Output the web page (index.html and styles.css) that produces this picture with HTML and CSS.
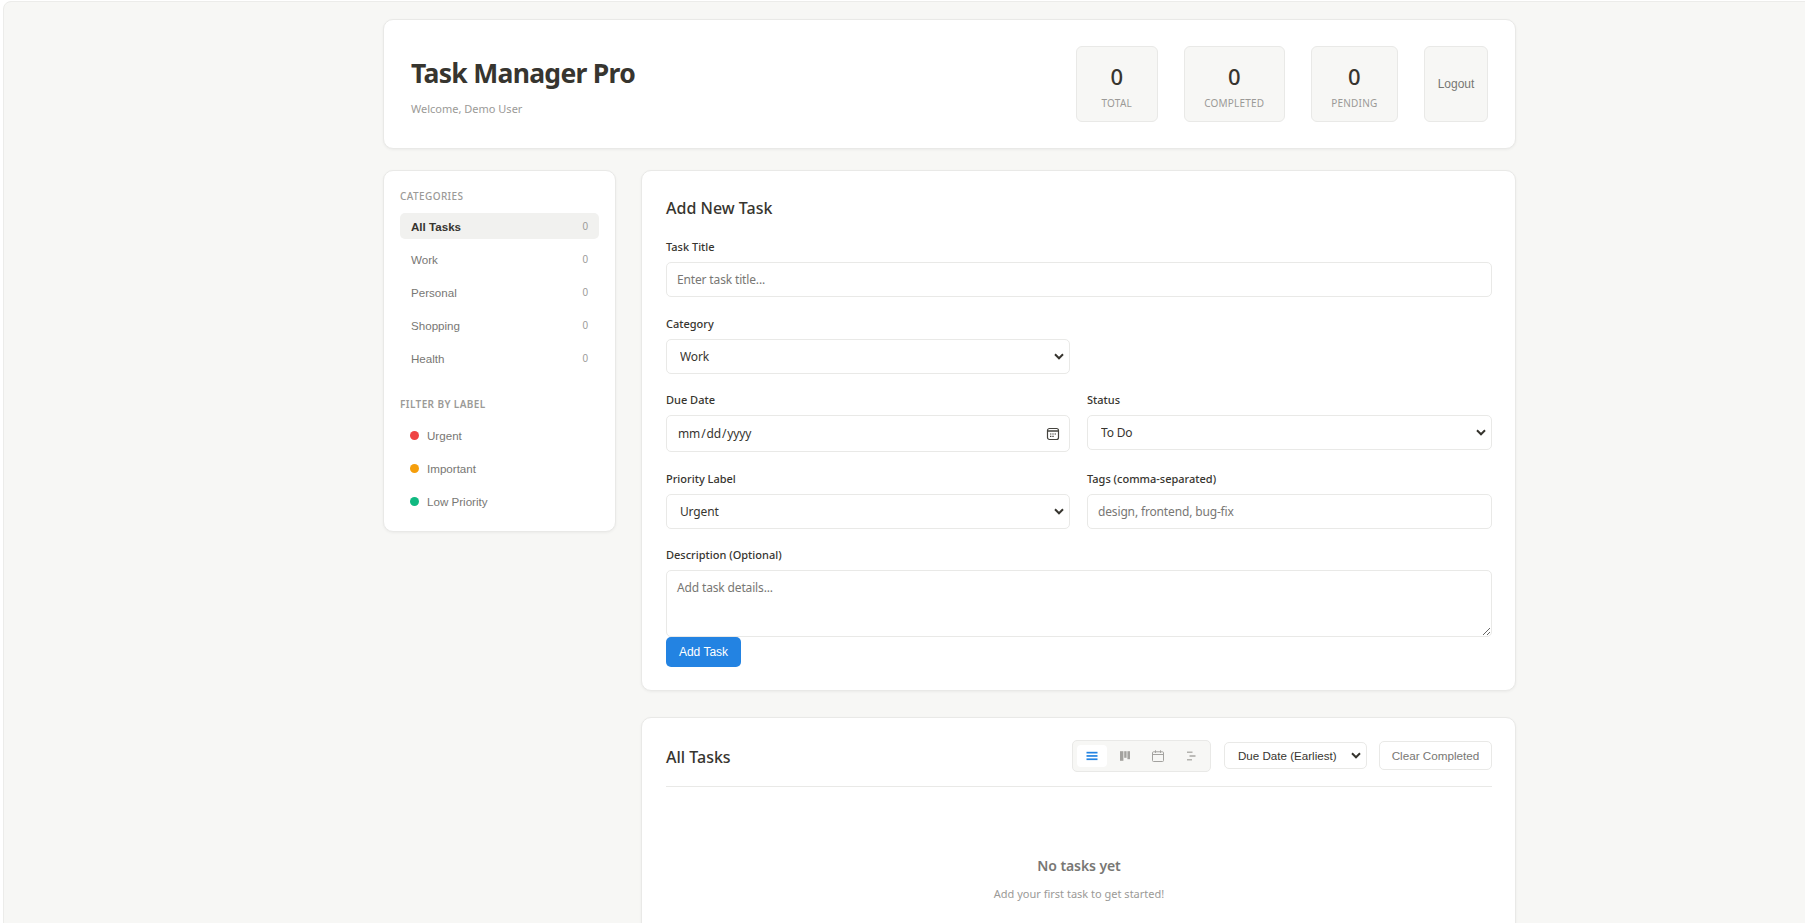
FILE: index.html
```html
<!DOCTYPE html>
<html lang="en">
<head>
    <meta charset="UTF-8">
    <meta name="viewport" content="width=device-width, initial-scale=1.0">
    <title>Task Manager Pro</title>
    <link rel="stylesheet" href="styles.css">
</head>
<body>
    <div class="frame">
        <div class="app">
            <header class="card top-bar">
                <div class="brand">
                    <h1>Task Manager Pro</h1>
                    <p>Welcome, Demo User</p>
                </div>
                <div class="top-actions">
                    <div class="stat stat-total"><span class="stat-value">0</span><span class="stat-label">Total</span></div>
                    <div class="stat"><span class="stat-value">0</span><span class="stat-label">Completed</span></div>
                    <div class="stat"><span class="stat-value">0</span><span class="stat-label">Pending</span></div>
                    <button class="logout" type="button">Logout</button>
                </div>
            </header>

            <div class="columns">
                <aside class="card sidebar">
                    <h3 class="side-title">Categories</h3>
                    <ul class="side-list">
                        <li class="side-item active"><span>All Tasks</span><span class="count">0</span></li>
                        <li class="side-item"><span>Work</span><span class="count">0</span></li>
                        <li class="side-item"><span>Personal</span><span class="count">0</span></li>
                        <li class="side-item"><span>Shopping</span><span class="count">0</span></li>
                        <li class="side-item"><span>Health</span><span class="count">0</span></li>
                    </ul>
                    <h3 class="side-title filter-title">Filter by Label</h3>
                    <ul class="side-list">
                        <li class="side-item label-item"><span class="dot dot-red"></span><span>Urgent</span></li>
                        <li class="side-item label-item"><span class="dot dot-orange"></span><span>Important</span></li>
                        <li class="side-item label-item"><span class="dot dot-green"></span><span>Low Priority</span></li>
                    </ul>
                </aside>

                <main class="main">
                    <section class="card panel">
                        <h2>Add New Task</h2>
                        <form class="task-form">
                            <div class="field">
                                <label for="title">Task Title</label>
                                <input type="text" id="title" placeholder="Enter task title...">
                            </div>
                            <div class="form-row">
                                <div class="field">
                                    <label for="category">Category</label>
                                    <select id="category">
                                        <option>Work</option>
                                        <option>Personal</option>
                                        <option>Shopping</option>
                                        <option>Health</option>
                                    </select>
                                </div>
                            </div>
                            <div class="form-row">
                                <div class="field">
                                    <label for="due">Due Date</label>
                                    <input type="date" id="due">
                                </div>
                                <div class="field">
                                    <label for="status">Status</label>
                                    <select id="status">
                                        <option>To Do</option>
                                        <option>In Progress</option>
                                        <option>Done</option>
                                    </select>
                                </div>
                            </div>
                            <div class="form-row">
                                <div class="field">
                                    <label for="priority">Priority Label</label>
                                    <select id="priority">
                                        <option>Urgent</option>
                                        <option>Important</option>
                                        <option>Low Priority</option>
                                    </select>
                                </div>
                                <div class="field">
                                    <label for="tags">Tags (comma-separated)</label>
                                    <input type="text" id="tags" placeholder="design, frontend, bug-fix">
                                </div>
                            </div>
                            <div class="field field-last">
                                <label for="desc">Description (Optional)</label>
                                <textarea id="desc" placeholder="Add task details..."></textarea>
                            </div>
                            <button class="add-btn" type="submit">Add Task</button>
                        </form>
                    </section>

                    <section class="card panel list-panel">
                        <div class="list-head">
                            <h2>All Tasks</h2>
                            <div class="list-tools">
                                <div class="view-tabs">
                                    <button class="view-tab active" type="button" aria-label="List">
                                        <svg width="12" height="12" viewBox="0 0 12 12"><rect x="0.5" y="1.8" width="11" height="1.7"/><rect x="0.5" y="5.1" width="11" height="1.7"/><rect x="0.5" y="8.4" width="11" height="1.7"/></svg>
                                    </button>
                                    <button class="view-tab" type="button" aria-label="Board">
                                        <svg width="12" height="12" viewBox="0 0 12 12"><rect x="1" y="1.2" width="3.4" height="9.6"/><rect x="5.2" y="1.2" width="2.4" height="6.6"/><rect x="8.4" y="1.2" width="2.6" height="8"/></svg>
                                    </button>
                                    <button class="view-tab" type="button" aria-label="Calendar">
                                        <svg width="12" height="12" viewBox="0 0 12 12" class="outline"><rect x="0.5" y="1.8" width="11" height="9.7" rx="1"/><path d="M0.5 4.5h11M3.5 0.3v2.6M8.5 0.3v2.6"/></svg>
                                    </button>
                                    <button class="view-tab" type="button" aria-label="Timeline">
                                        <svg width="12" height="12" viewBox="0 0 12 12"><rect x="2" y="1.6" width="5.5" height="1.2"/><rect x="4.5" y="5.3" width="6" height="1.4"/><rect x="2" y="9.2" width="5" height="1.2"/></svg>
                                    </button>
                                </div>
                                <select class="sort-select">
                                    <option>Due Date (Earliest)</option>
                                    <option>Due Date (Latest)</option>
                                    <option>Priority</option>
                                </select>
                                <button class="clear-btn" type="button">Clear Completed</button>
                            </div>
                        </div>
                        <div class="empty">
                            <h3>No tasks yet</h3>
                            <p>Add your first task to get started!</p>
                        </div>
                    </section>
                </main>
            </div>
        </div>
    </div>
</body>
</html>
```

FILE: styles.css
```css
* {
    box-sizing: border-box;
}
html, body {
    height: 923px;
    overflow: hidden;
}
body {
    margin: 0;
    background-color: #ffffff;
    color: #37352f;
    font-family: 'Noto Sans', 'Open Sans', sans-serif;
}
.frame {
    width: 1893px;
    height: 1400px;
    margin: 1px 0 0 3px;
    padding-top: 17px;
    background-color: #f7f7f5;
    border: 1px solid #ececea;
    border-radius: 8px;
}
.app {
    width: 1133px;
    margin: 0 auto;
}
.card {
    background-color: #ffffff;
    border: 1px solid #e9e9e7;
    border-radius: 10px;
    box-shadow: 0 1px 3px rgba(0, 0, 0, 0.05);
}

/* header */
.top-bar {
    display: flex;
    align-items: center;
    justify-content: space-between;
    height: 130px;
    padding: 0 27px;
    margin-bottom: 21px;
}
.brand {
    padding-top: 4px;
}
.brand h1 {
    margin: 0 0 10px;
    font-size: 26.5px;
    line-height: 36px;
    font-weight: 700;
    letter-spacing: -0.7px;
}
.brand p {
    margin: 0;
    font-size: 11px;
    line-height: 16px;
    color: #9b9a97;
}
.top-actions {
    display: flex;
    gap: 26px;
}
.stat {
    display: flex;
    flex-direction: column;
    align-items: center;
    height: 76px;
    padding: 0 19.5px;
    background-color: #f7f7f5;
    border: 1px solid #e9e9e7;
    border-radius: 6px;
}
.stat-total {
    min-width: 82px;
}
.stat-value {
    margin-top: 14px;
    font-size: 22px;
    line-height: 30px;
    font-weight: 500;
}
.stat-label {
    margin-top: 5px;
    font-size: 10px;
    line-height: 14px;
    letter-spacing: 0.2px;
    text-transform: uppercase;
    color: #9b9a97;
}
.logout {
    width: 64px;
    height: 76px;
    padding: 0;
    background-color: #f7f7f5;
    border: 1px solid #e9e9e7;
    border-radius: 6px;
    font-family: 'Liberation Sans', Arial, sans-serif;
    font-size: 12px;
    color: #787774;
}

/* layout */
.columns {
    display: flex;
    align-items: flex-start;
    gap: 25px;
}
.sidebar {
    flex: 0 0 233px;
    height: 362px;
    padding: 17px 16px 16px;
}
.side-title {
    margin: 0 0 9px;
    font-size: 10px;
    line-height: 16px;
    font-weight: 500;
    letter-spacing: 0.4px;
    text-transform: uppercase;
    color: #9b9a97;
}
.filter-title {
    margin-top: 25px;
    margin-bottom: 10px;
    font-weight: 600;
}
.side-list {
    list-style: none;
    margin: 0;
    padding: 0;
}
.side-item {
    display: flex;
    align-items: center;
    justify-content: space-between;
    height: 26px;
    margin-bottom: 7px;
    padding: 0 11px;
    border-radius: 5px;
    font-family: 'Liberation Sans', Arial, sans-serif;
    font-size: 11.6px;
    color: #787774;
}
.side-item.active {
    background-color: #f1f1ef;
    color: #37352f;
    font-weight: 700;
}
.count {
    font-size: 10px;
    font-weight: 400;
    color: #9b9a97;
}
.label-item {
    justify-content: flex-start;
    gap: 8px;
    padding: 0 10px;
}
.dot {
    width: 9px;
    height: 9px;
    border-radius: 50%;
}
.dot-red { background-color: #ef4444; }
.dot-orange { background-color: #f59e0b; }
.dot-green { background-color: #10b981; }

.main {
    flex: 1;
    display: flex;
    flex-direction: column;
    gap: 26px;
}
.panel {
    padding: 25px 23px 23px 24px;
}
.panel h2 {
    margin: 0;
    font-size: 16px;
    line-height: 24px;
    font-weight: 500;
}

/* form */
.task-form {
    margin-top: 19px;
}
.field {
    display: flex;
    flex-direction: column;
    flex: 1;
    margin-bottom: 18.5px;
}
.field-last {
    margin-bottom: 0;
}
.field label {
    margin-bottom: 7px;
    font-size: 11px;
    line-height: 16px;
    font-weight: 500;
}
.field input, .field select, .field textarea {
    width: 100%;
    height: 35px;
    padding: 0 10px;
    background-color: #ffffff;
    border: 1px solid #e9e9e7;
    border-radius: 5px;
    color: #37352f;
    font-family: inherit;
    font-size: 12px;
    letter-spacing: -0.15px;
}
.field select, .sort-select {
    appearance: none;
    background-image: url("data:image/svg+xml,%3Csvg xmlns='http://www.w3.org/2000/svg' width='10' height='7' viewBox='0 0 10 7'%3E%3Cpath d='M1 1.3 5 5.3 9 1.3' fill='none' stroke='%2337352f' stroke-width='2'/%3E%3C/svg%3E");
    background-repeat: no-repeat;
    background-position: right 5px center;
}
.field select {
    padding-left: 13px;
}
.field input[type="date"] {
    height: 37px;
}
.field input::-webkit-calendar-picker-indicator {
    width: 14px;
    height: 14px;
    margin-right: -1px;
    padding: 0;
    opacity: 1;
    background-image: url("data:image/svg+xml,%3Csvg xmlns='http://www.w3.org/2000/svg' width='14' height='14' viewBox='0 0 14 14'%3E%3Crect x='1.5' y='1.5' width='11' height='11' rx='2' fill='none' stroke='%2345443f' stroke-width='1.2'/%3E%3Cpath d='M2 4h10' stroke='%2345443f' stroke-width='1.6'/%3E%3Cpath d='M4 7h1.4M6.3 7h1.4M8.6 7h1.4M4 9.3h1.4M6.3 9.3h1.4' stroke='%2345443f' stroke-width='1.2'/%3E%3C/svg%3E");
}
.field textarea {
    display: block;
    height: 67px;
    padding-top: 8px;
}
.field input::placeholder, .field textarea::placeholder {
    color: #787774;
}
.form-row {
    display: flex;
    gap: 17px;
}
.form-row .field {
    flex: 0 0 404px;
}
.form-row .field + .field {
    flex: 1;
}
.add-btn {
    display: block;
    width: 75px;
    height: 30px;
    padding: 0;
    background-color: #2383e2;
    border: none;
    border-radius: 5px;
    color: #ffffff;
    font-family: 'Liberation Sans', Arial, sans-serif;
    font-size: 12px;
}

/* task list */
.list-panel {
    padding-top: 22px;
}
.list-head {
    display: flex;
    align-items: center;
    justify-content: space-between;
    height: 47px;
    padding-bottom: 15px;
    border-bottom: 1px solid #e9e9e7;
}
.list-head h2 {
    padding-top: 2px;
}
.list-tools {
    display: flex;
    align-items: center;
    gap: 12px;
}
.view-tabs {
    display: flex;
    gap: 3px;
    height: 32px;
    margin-right: 1px;
    padding: 4px;
    background-color: #f7f7f5;
    border: 1px solid #e9e9e7;
    border-radius: 5px;
}
.view-tab {
    display: flex;
    align-items: center;
    justify-content: center;
    width: 30px;
    padding: 0;
    background: none;
    border: none;
    border-radius: 4px;
}
.view-tab svg {
    fill: #a3a29f;
}
.view-tab svg.outline {
    fill: none;
    stroke: #a3a29f;
    stroke-width: 1;
}
.view-tab.active {
    background-color: #ffffff;
}
.view-tab.active svg {
    fill: #2383e2;
}
.sort-select {
    width: 143px;
    height: 27px;
    padding: 0 16px 0 13px;
    background-color: #ffffff;
    border: 1px solid #e9e9e7;
    border-radius: 5px;
    color: #37352f;
    font-family: 'Liberation Sans', Arial, sans-serif;
    font-size: 11.6px;
}
.clear-btn {
    width: 113px;
    height: 29px;
    padding: 0;
    background-color: #ffffff;
    border: 1px solid #e9e9e7;
    border-radius: 5px;
    color: #787774;
    font-family: 'Liberation Sans', Arial, sans-serif;
    font-size: 11.7px;
}
.empty {
    padding: 69px 0 70px;
    text-align: center;
}
.empty h3 {
    margin: 0 0 10px;
    font-size: 14px;
    line-height: 20px;
    font-weight: 600;
    letter-spacing: -0.1px;
    color: #787774;
}
.empty p {
    margin: 0;
    font-size: 11px;
    line-height: 16px;
    color: #9b9a97;
}
```
